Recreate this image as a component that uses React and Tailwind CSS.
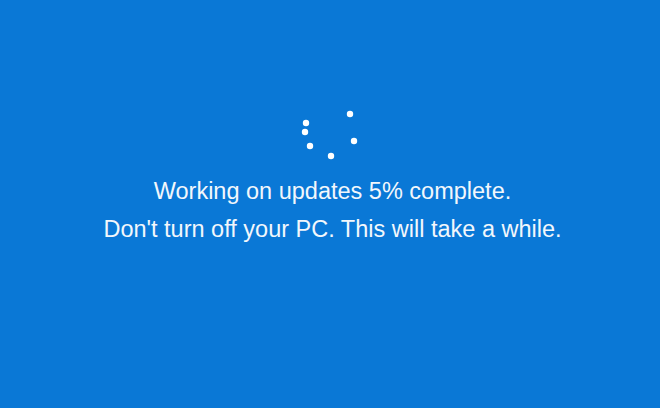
import React from 'react';

const dots = [
    [11, 18],
    [10, 27],
    [15, 41],
    [36, 51],
    [59, 36],
    [55, 9],
];

const App = () => {
    return (
        <div className="w-[660px] h-[408px] bg-[#0a78d6] flex flex-col items-center pt-[105px] text-white font-['Liberation_Sans',Arial,sans-serif]">
            <svg width="70" height="60" viewBox="0 0 70 60" className="ml-[-1px]">
                {dots.map(([x, y], i) => (
                    <circle key={i} cx={x} cy={y} r="3.2" fill="#fff" />
                ))}
            </svg>
            <div className="mt-[7px] ml-[5px] text-center text-[23.5px] leading-[38px] text-[#f2f7fc]">
                <p>Working on updates 5% complete.</p>
                <p>Don't turn off your PC. This will take a while.</p>
            </div>
        </div>
    );
};

export default App;
